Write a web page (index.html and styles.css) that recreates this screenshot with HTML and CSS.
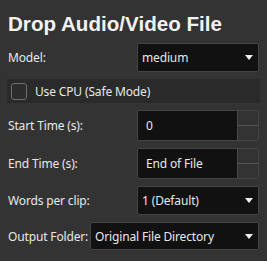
FILE: index.html
```html
<!DOCTYPE html>
<html>
<head>
	<title>Drop Audio/Video File</title>
	<link rel="stylesheet" href="styles.css">
</head>
<body>
	<div class="panel">
		<h1 class="title">Drop Audio/Video File</h1>

		<div class="row">
			<span class="label">Model:</span>
			<div class="combo"><span>medium</span><i class="arrow"></i></div>
		</div>

		<div class="check-row">
			<span class="check"></span>
			<span>Use CPU (Safe Mode)</span>
		</div>

		<div class="row tall">
			<span class="label">Start Time (s):</span>
			<div class="spin">
				<span class="spin-text">0</span>
				<div class="spin-btns"><b></b><b></b></div>
			</div>
		</div>

		<div class="row tall">
			<span class="label">End Time (s):</span>
			<div class="spin">
				<span class="spin-text">End of File</span>
				<div class="spin-btns"><b></b><b></b></div>
			</div>
		</div>

		<div class="row">
			<span class="label">Words per clip:</span>
			<div class="combo"><span>1 (Default)</span><i class="arrow"></i></div>
		</div>

		<div class="row folder">
			<span class="label">Output Folder:</span>
			<div class="combo wide"><span>Original File Directory</span><i class="arrow"></i></div>
		</div>
	</div>
</body>
</html>
```

FILE: styles.css
```css
html, body {
	margin: 0;
	background: #333333;
}
body {
	font-family: "Noto Sans", sans-serif;
	font-size: 12px;
	letter-spacing: -0.15px;
	color: #e8e8e8;
}
.panel {
	display: flex;
	flex-direction: column;
	gap: 7px;
	padding: 12px 8px 0 8px;
	width: 251px;
}
.title {
	margin: 0 0 1px 0;
	font-family: "Liberation Sans", Arial, sans-serif;
	font-weight: bold;
	font-size: 20.6px;
	letter-spacing: 0;
	line-height: 23px;
	color: #f2f2f2;
}
.row {
	display: flex;
	align-items: center;
	justify-content: space-between;
	height: 29px;
}
.row.tall { height: 31px; }
.row.folder { height: 28px; }
.label { white-space: nowrap; }
.combo {
	box-sizing: border-box;
	width: 122px;
	height: 100%;
	display: flex;
	align-items: center;
	justify-content: space-between;
	padding: 0 5px 0 4px;
	background: #111111;
	border: 1px solid #444444;
	border-radius: 2px;
}
.combo.wide { width: 169px; }
.arrow {
	width: 0;
	height: 0;
	border-left: 4px solid transparent;
	border-right: 4px solid transparent;
	border-top: 5px solid #f0f0f0;
}
.check-row {
	display: flex;
	align-items: center;
	gap: 8px;
	height: 24px;
	margin: 0 -1px 0 -1px;
	padding: 0 4px;
	background: #2a2a2a;
}
.check {
	box-sizing: border-box;
	width: 16px;
	height: 17px;
	border: 1px solid #6e6e6e;
	border-radius: 3px;
	background: #2c2c2c;
}
.spin {
	box-sizing: border-box;
	width: 122px;
	height: 100%;
	display: flex;
	background: #111111;
	border: 1px solid #444444;
	border-radius: 2px;
}
.spin-text {
	flex: 1;
	display: flex;
	align-items: center;
	padding-left: 8px;
}
.spin-btns {
	width: 20px;
	display: flex;
	flex-direction: column;
	background: #333333;
	border-left: 1px solid #4a4a4a;
}
.spin-btns b {
	flex: 1;
}
.spin-btns b + b {
	border-top: 1px solid #555555;
}
```
